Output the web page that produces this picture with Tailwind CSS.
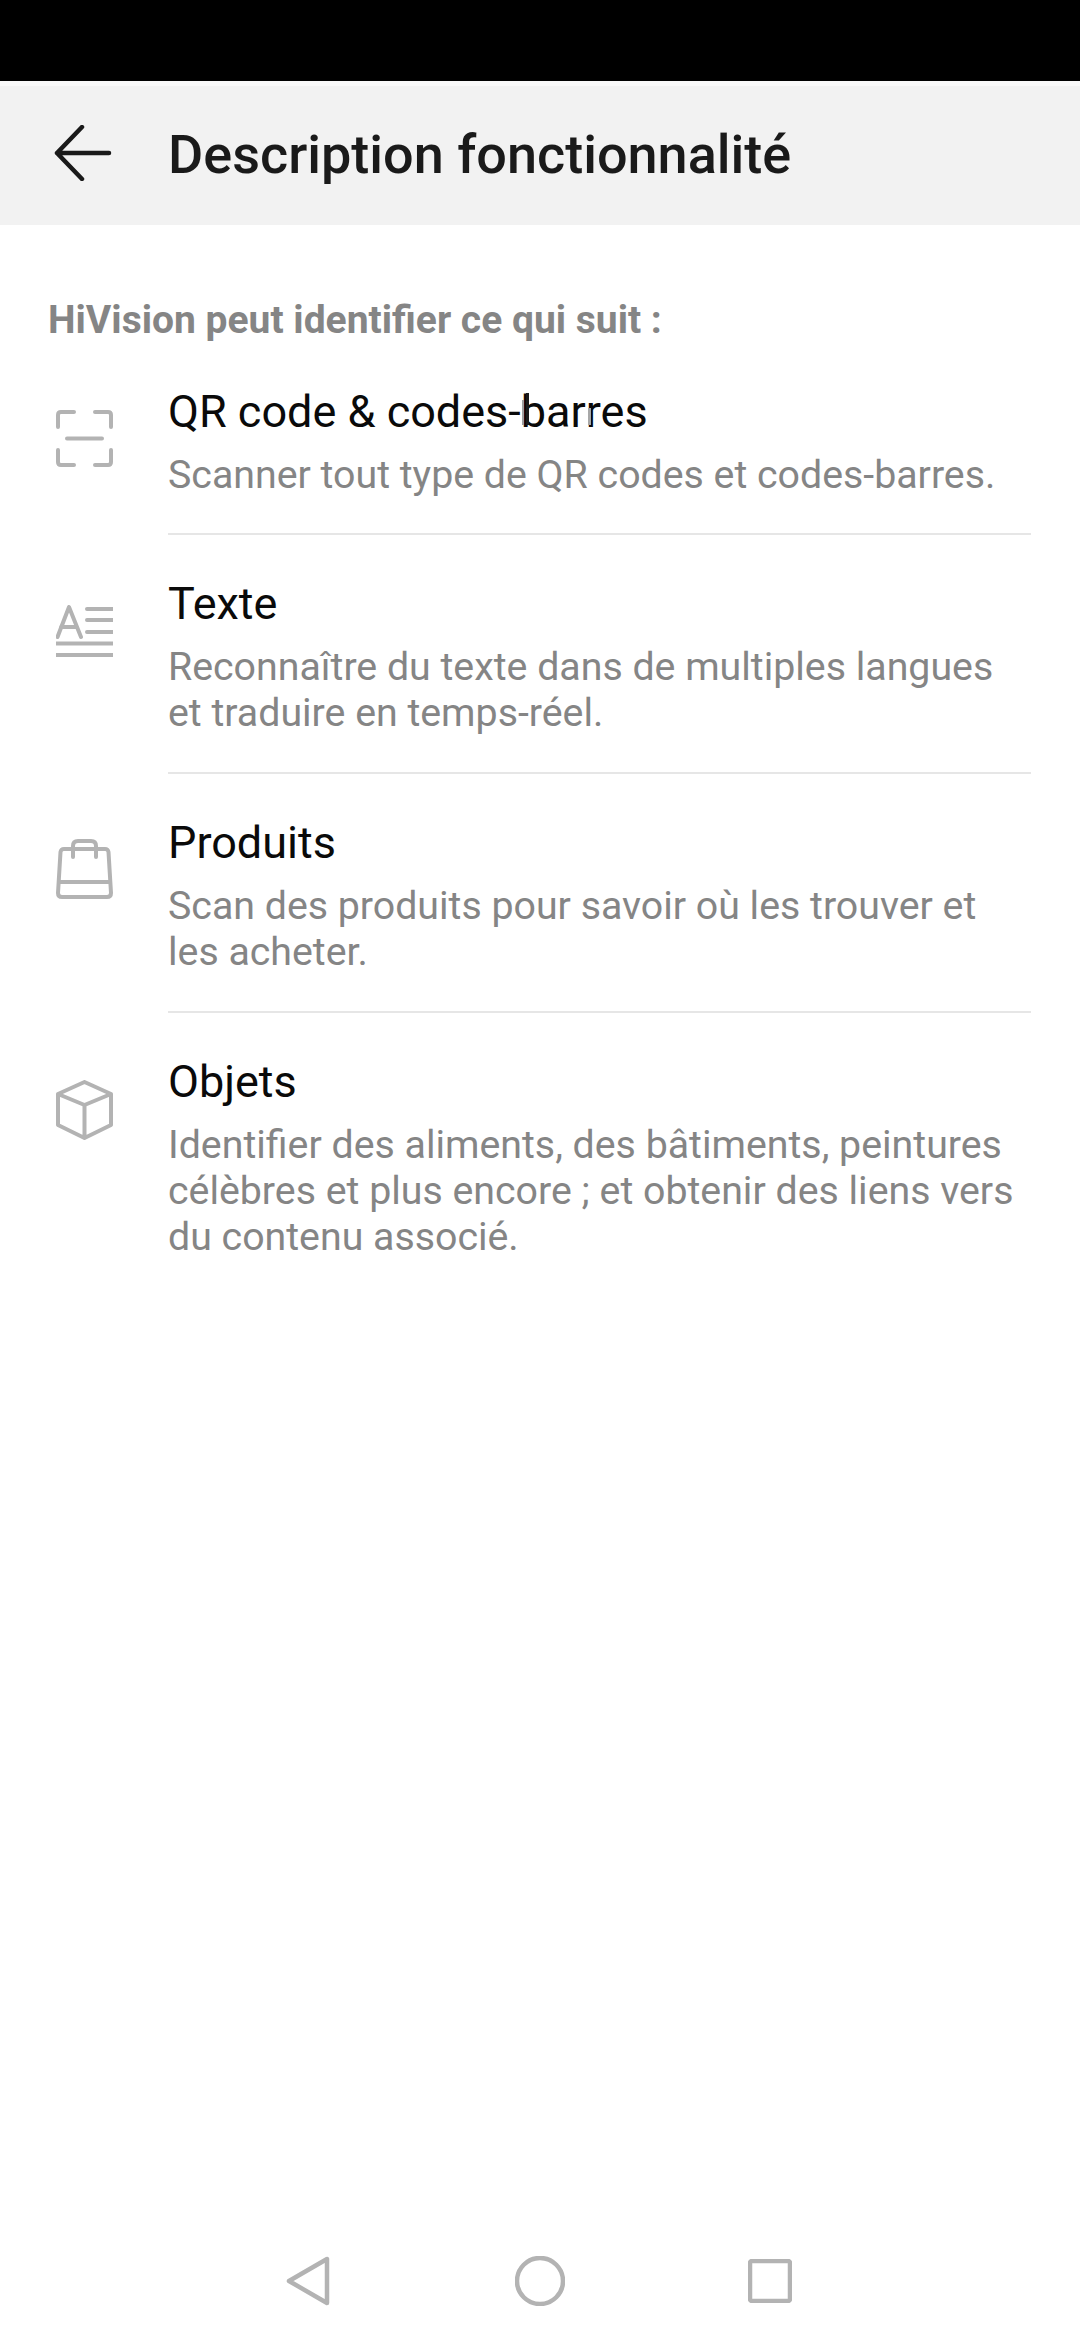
<!DOCTYPE html>
<html lang="fr">
<head>
    <meta charset="UTF-8">
    <meta name="viewport" content="width=device-width, initial-scale=1.0">
    <title>Description fonctionnalité</title>
    <script src="https://cdn.jsdelivr.net/npm/@tailwindcss/browser@4"></script>
</head>
<body class="bg-white font-['Roboto',sans-serif]">
    <div class="w-[1080px] h-[2340px] flex flex-col overflow-hidden">
        <div class="h-[81px] bg-black shrink-0"></div>
        <div class="h-[5px] bg-[#f9f9f9] shrink-0"></div>

        <header class="h-[139px] pb-[5px] bg-[#f2f2f2] flex items-center shrink-0">
            <svg class="ml-[54px] w-[58px] h-[56px] text-[#1a1a1a]" viewBox="0 0 58 56" fill="none" stroke="currentColor" stroke-width="4.5" stroke-linecap="round" stroke-linejoin="round">
                <path d="M28 2 L3 28 L28 54 M3 28 H55"/>
            </svg>
            <h1 class="ml-[56px] pt-[3px] text-[54px] leading-none font-medium text-[#1a1a1a]">Description fonctionnalité</h1>
        </header>

        <main class="flex-1 flex flex-col">
            <h2 class="ml-[48px] mt-[72px] text-[39px] leading-[46px] font-bold text-[#858585]">HiVision peut identifier ce qui suit :</h2>

            <div class="flex mt-[39px]">
                <div class="w-[168px] shrink-0 pt-[28px] pl-[56px]">
                    <svg class="w-[57px] h-[57px] text-[#b3b3b3]" viewBox="0 0 57 57" fill="none" stroke="currentColor" stroke-width="4" stroke-linecap="round" stroke-linejoin="round">
                        <path d="M2 17 V5 Q2 2 5 2 H18 M39 2 H52 Q55 2 55 5 V17 M2 40 V52 Q2 55 5 55 H18 M39 55 H52 Q55 55 55 52 V40 M11 28.5 H46"/>
                    </svg>
                </div>
                <div class="relative w-[863px] border-b-2 border-[#e6e6e6] h-[153px]">
                    <p class="text-[45px] leading-[52px] text-[#0a0a0a] mt-[4px]">QR code &amp; codes-barres</p>
                    <p class="text-[39.3px] leading-[46px] text-[#858585] mt-[14px]">Scanner tout type de QR codes et codes-barres.</p>
                    <!-- capture glitch over "barres" -->
                    <span class="absolute left-[358px] top-[11px] w-[3px] h-[32px] bg-[#1a1a1a]"></span>
                    <span class="absolute left-[354px] top-[18px] w-[2px] h-[25px] bg-[#a0a0a0]"></span>
                    <span class="absolute left-[420px] top-[26px] w-[3px] h-[17px] bg-[#a8a8a8]"></span>
                </div>
            </div>

            <div class="flex">
                <div class="w-[168px] shrink-0 pt-[70px] pl-[56px]">
                    <svg class="w-[57px] h-[52px] text-[#b3b3b3]" viewBox="0 0 57 52" fill="none" stroke="currentColor" stroke-width="4" stroke-linecap="round" stroke-linejoin="round">
                        <path d="M1.5 32 L13 2 L25 32 M5 22 H21 M31 4 H57 M31 15 H57 M31 27 H57" />
                        <path d="M0 38.5 H57 M0 50 H57" stroke-linecap="butt"/>
                    </svg>
                </div>
                <div class="w-[863px] border-b-2 border-[#e6e6e6] h-[239px]">
                    <p class="text-[45px] leading-[52px] text-[#0a0a0a] mt-[43px]">Texte</p>
                    <p class="text-[39.3px] leading-[46px] text-[#858585] mt-[14px]">Reconnaître du texte dans de multiples langues<br>et traduire en temps-réel.</p>
                </div>
            </div>

            <div class="flex">
                <div class="w-[168px] shrink-0 pt-[65px] pl-[56px]">
                    <svg class="w-[57px] h-[60px] text-[#b3b3b3]" viewBox="0 0 57 60" fill="none" stroke="currentColor" stroke-width="4" stroke-linecap="round" stroke-linejoin="round">
                        <path d="M8 10 H49 Q52 10 52.5 13 L55 54 Q55 58 51 58 H6 Q2 58 2 54 L4.5 13 Q5 10 8 10 Z M3 43 H54 M17 18 V7 Q17 2 22 2 H35 Q40 2 40 7 V18"/>
                    </svg>
                </div>
                <div class="w-[863px] border-b-2 border-[#e6e6e6] h-[239px]">
                    <p class="text-[45px] leading-[52px] text-[#0a0a0a] mt-[43px]">Produits</p>
                    <p class="text-[39.3px] leading-[46px] text-[#858585] mt-[14px]">Scan des produits pour savoir où les trouver et<br>les acheter.</p>
                </div>
            </div>

            <div class="flex">
                <div class="w-[168px] shrink-0 pt-[67px] pl-[56px]">
                    <svg class="w-[57px] h-[60px] text-[#b3b3b3]" viewBox="0 0 57 60" fill="none" stroke="currentColor" stroke-width="4" stroke-linecap="round" stroke-linejoin="round">
                        <path d="M28.5 2 L55 14 V45 L28.5 58 L2 45 V14 Z M2 14 L28.5 25 L55 14 M28.5 25 V58"/>
                    </svg>
                </div>
                <div class="w-[863px]">
                    <p class="text-[45px] leading-[52px] text-[#0a0a0a] mt-[43px]">Objets</p>
                    <p class="text-[39.3px] leading-[46px] text-[#858585] mt-[14px]">Identifier des aliments, des bâtiments, peintures<br>célèbres et plus encore ; et obtenir des liens vers<br>du contenu associé.</p>
                </div>
            </div>
        </main>

        <nav class="h-[120px] shrink-0 flex items-start pl-[286px] text-[#b3b3b3]">
            <svg class="w-[44px] h-[50px] mt-[36px]" viewBox="0 0 44 50" fill="none" stroke="currentColor" stroke-width="4.5" stroke-linejoin="round">
                <path d="M41 3 V47 L3 25 Z"/>
            </svg>
            <svg class="w-[50px] h-[50px] mt-[36px] ml-[185px]" viewBox="0 0 50 50" fill="none" stroke="currentColor" stroke-width="4.5">
                <circle cx="25" cy="25" r="23"/>
            </svg>
            <svg class="w-[44px] h-[44px] mt-[39px] ml-[183px]" viewBox="0 0 44 44" fill="none" stroke="currentColor" stroke-width="4.5" stroke-linejoin="round">
                <rect x="2" y="2" width="40" height="40" rx="2"/>
            </svg>
        </nav>
    </div>
</body>
</html>
